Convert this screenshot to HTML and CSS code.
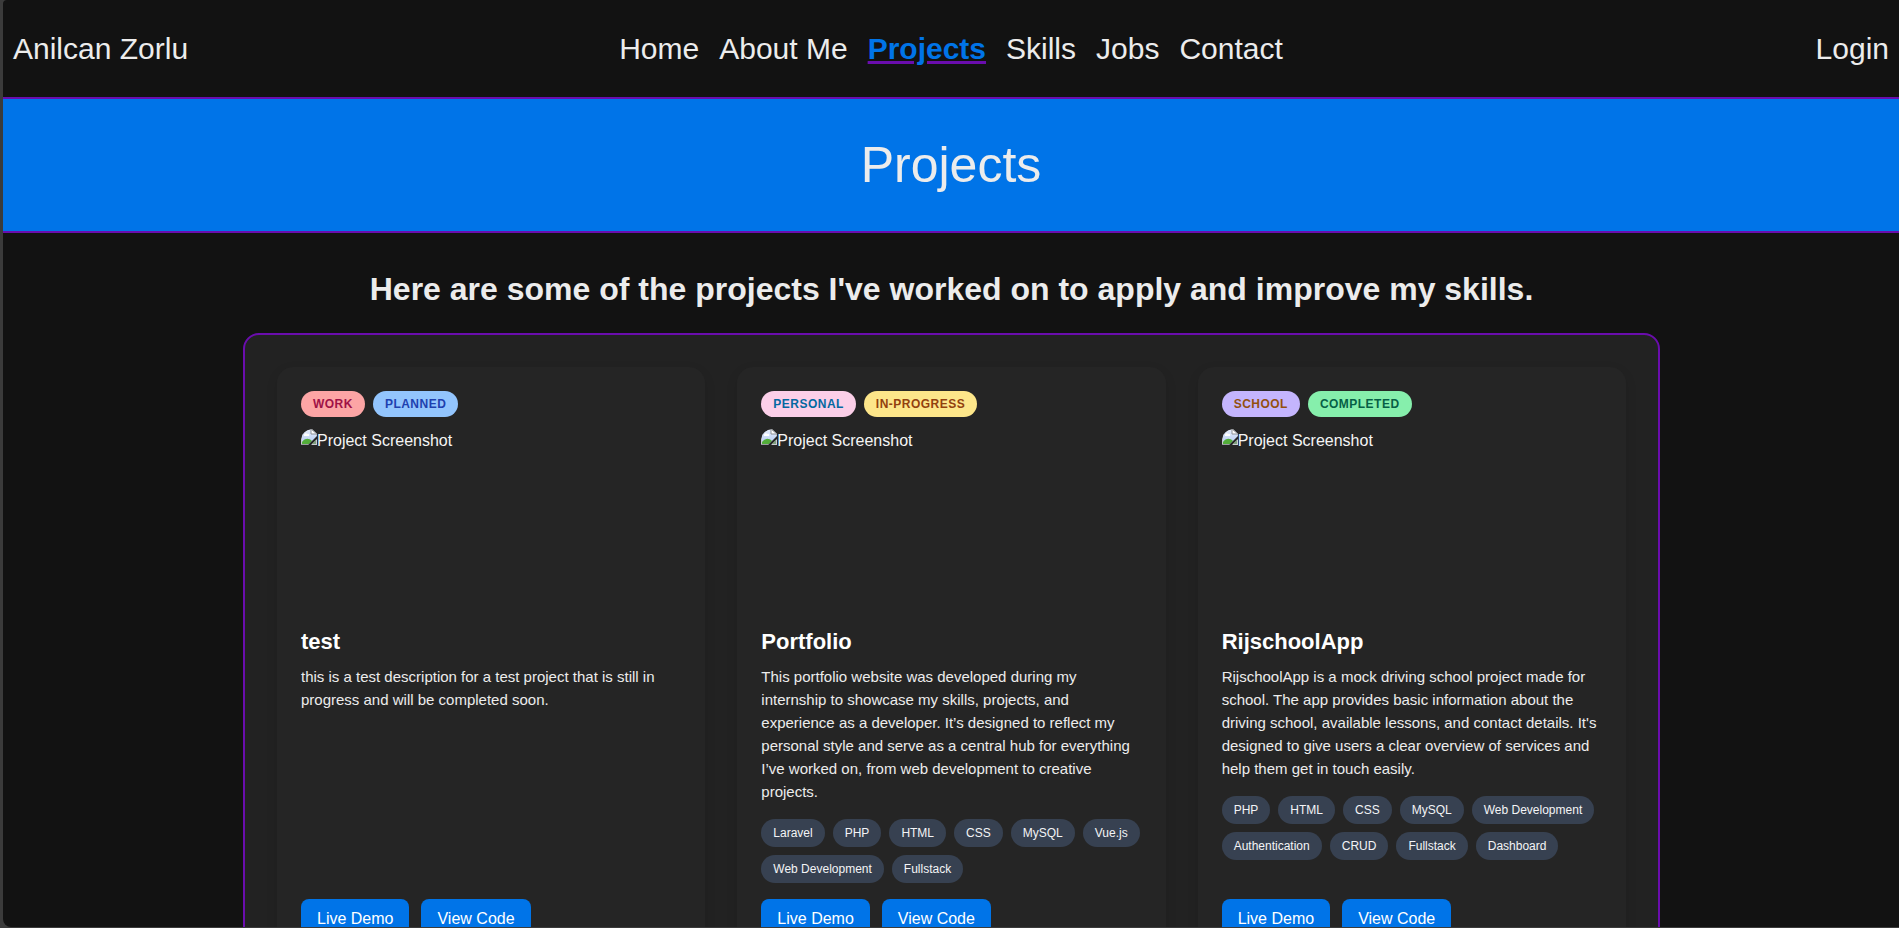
FILE: index.html
```html
<!DOCTYPE html>
<html lang="en">
<head>
<meta charset="utf-8">
<meta name="viewport" content="width=device-width, initial-scale=1">
<title>Projects - Anilcan Zorlu</title>
<link rel="stylesheet" href="styles.css">
</head>
<body>
<svg class="sprite" aria-hidden="true">
  <defs>
    <linearGradient id="sky" x1="0" y1="0" x2="0" y2="1">
      <stop offset="0" stop-color="#e4ecfb"/>
      <stop offset="1" stop-color="#b4caf2"/>
    </linearGradient>
  </defs>
  <symbol id="broken" viewBox="0 0 16 16">
    <path d="M0 0H11L16 5V16H0Z" fill="#c9ccd1"/>
    <path d="M1 1H10V5H15V8L8 15H1Z" fill="url(#sky)"/>
    <path d="M3 6C3 4 6 4 6 5C8 4 9 6 8 7H3Z" fill="#fff"/>
    <path d="M1 15V13C4 9 8 9 11 12L8 15Z" fill="#53ad3a"/>
    <path d="M10 0V5H16Z" fill="#fff" stroke="#8d9196"/>
    <path d="M16 7V10L10 16H7Z" fill="#252525"/>
    <path d="M11 15L15 11V15Z" fill="#7fa07c"/>
    <path d="M0 15H7V16H0Z" fill="#9a9da1"/>
  </symbol>
</svg>
<div class="page">
  <header class="header">
    <a class="brand" href="#">Anilcan Zorlu</a>
    <nav class="nav" aria-label="Main">
      <a href="#">Home</a>
      <a href="#">About Me</a>
      <a href="#" class="active" aria-current="page">Projects</a>
      <a href="#">Skills</a>
      <a href="#">Jobs</a>
      <a href="#">Contact</a>
    </nav>
    <a class="login" href="#">Login</a>
  </header>
  <div class="hero"><h1>Projects</h1></div>
  <main class="main">
    <h2 class="intro">Here are some of the projects I've worked on to apply and improve my skills.</h2>
    <div class="grid">
      <article class="card">
        <div class="badges"><span class="badge work">WORK</span><span class="badge planned">PLANNED</span></div>
        <div class="shot"><svg width="16" height="16" aria-hidden="true"><use href="#broken"/></svg><span>Project Screenshot</span></div>
        <h3>test</h3>
        <p>this is a test description for a test project that is still in progress and will be completed soon.</p>
        <div class="actions"><a href="#">Live Demo</a><a href="#">View Code</a></div>
      </article>
      <article class="card">
        <div class="badges"><span class="badge personal">PERSONAL</span><span class="badge progress">IN-PROGRESS</span></div>
        <div class="shot"><svg width="16" height="16" aria-hidden="true"><use href="#broken"/></svg><span>Project Screenshot</span></div>
        <h3>Portfolio</h3>
        <p>This portfolio website was developed during my internship to showcase my skills, projects, and experience as a developer. It’s designed to reflect my personal style and serve as a central hub for everything I’ve worked on, from web development to creative projects.</p>
        <ul class="tags"><li>Laravel</li><li>PHP</li><li>HTML</li><li>CSS</li><li>MySQL</li><li>Vue.js</li><li>Web Development</li><li>Fullstack</li></ul>
        <div class="actions"><a href="#">Live Demo</a><a href="#">View Code</a></div>
      </article>
      <article class="card">
        <div class="badges"><span class="badge school">SCHOOL</span><span class="badge completed">COMPLETED</span></div>
        <div class="shot"><svg width="16" height="16" aria-hidden="true"><use href="#broken"/></svg><span>Project Screenshot</span></div>
        <h3>RijschoolApp</h3>
        <p>RijschoolApp is a mock driving school project made for school. The app provides basic information about the driving school, available lessons, and contact details. It's designed to give users a clear overview of services and help them get in touch easily.</p>
        <ul class="tags"><li>PHP</li><li>HTML</li><li>CSS</li><li>MySQL</li><li>Web Development</li><li>Authentication</li><li>CRUD</li><li>Fullstack</li><li>Dashboard</li></ul>
        <div class="actions"><a href="#">Live Demo</a><a href="#">View Code</a></div>
      </article>
    </div>
  </main>
</div>
</body>
</html>
```

FILE: styles.css
```css
* { box-sizing: border-box; }

body {
  margin: 0;
  padding: 0 0 1px 3px;
  background: #3b3b3b;
  color: #ececec;
  font-family: "Liberation Sans", Arial, sans-serif;
}

.sprite { position: absolute; width: 0; height: 0; }

.page {
  height: calc(100vh - 1px);
  overflow-y: auto;
  scrollbar-width: none;
  background: #121212;
  border-radius: 4px 0 0 8px;
}

a { color: inherit; text-decoration: none; }

.header {
  display: grid;
  grid-template-columns: 1fr auto 1fr;
  align-items: center;
  padding: 32px 10px 31px;
  border-bottom: 2px solid #6a0dad;
  font-size: 30px;
  line-height: 34px;
}

.nav { display: flex; gap: 20px; }

.nav .active {
  color: #0074e8;
  font-weight: bold;
  text-decoration: underline;
  text-decoration-color: #6a0dad;
}

.login { justify-self: end; }

.hero {
  padding: 36px 0;
  background: #0074e8;
  border-bottom: 2px solid #6a0dad;
  text-align: center;
}

.hero h1 {
  margin: 0;
  font-size: 50px;
  font-weight: normal;
  line-height: 60px;
}

.main { padding: 36px 239px 32px 240px; }

.intro {
  margin: 0 0 24px;
  font-size: 32px;
  line-height: 40px;
  text-align: center;
}

.grid {
  display: grid;
  grid-template-columns: repeat(3, minmax(0, 1fr));
  gap: 32px;
  padding: 32px;
  background: #222;
  border: 2px solid #6a0dad;
  border-radius: 16px;
}

.card {
  display: flex;
  flex-direction: column;
  padding: 24px;
  background: #252525;
  border-radius: 16px;
  box-shadow: 0 4px 12px rgba(0, 0, 0, 0.1);
}

.badges { display: flex; gap: 8px; margin-bottom: 12px; }

.badge {
  padding: 5px 12px;
  border-radius: 13px;
  font-size: 12px;
  font-weight: bold;
  line-height: 16px;
  letter-spacing: 0.04em;
}

.work { background: #fca5a5; color: #9f1247; }
.planned { background: #93c5fd; color: #1e40af; }
.personal { background: #fbcfe8; color: #0369a1; }
.progress { background: #fde68a; color: #92400e; }
.school { background: #c4b5fd; color: #92500e; }
.completed { background: #86efac; color: #065f46; }

.shot {
  display: flex;
  height: 180px;
  margin-bottom: 16px;
  overflow: hidden;
  border-radius: 12px;
  color: #f5f5f5;
  font-size: 16px;
  line-height: 24px;
}

.card h3 {
  margin: 0 0 6px;
  color: #fff;
  font-size: 22px;
  line-height: 34px;
}

.card p {
  margin: 0 0 16px;
  font-size: 15px;
  line-height: 23px;
}

.tags {
  display: flex;
  flex-wrap: wrap;
  gap: 8px;
  margin: 0 0 16px;
  padding: 0;
  list-style: none;
}

.tags li {
  padding: 6px 12px;
  background: #374151;
  border-radius: 14px;
  color: #f3f4f6;
  font-size: 12px;
  line-height: 16px;
}

.actions { display: flex; gap: 12px; margin-top: auto; }

.actions a {
  padding: 8px 16px;
  background: #0074e8;
  border-radius: 8px;
  color: #fff;
  font-size: 16px;
  line-height: 24px;
}
```
